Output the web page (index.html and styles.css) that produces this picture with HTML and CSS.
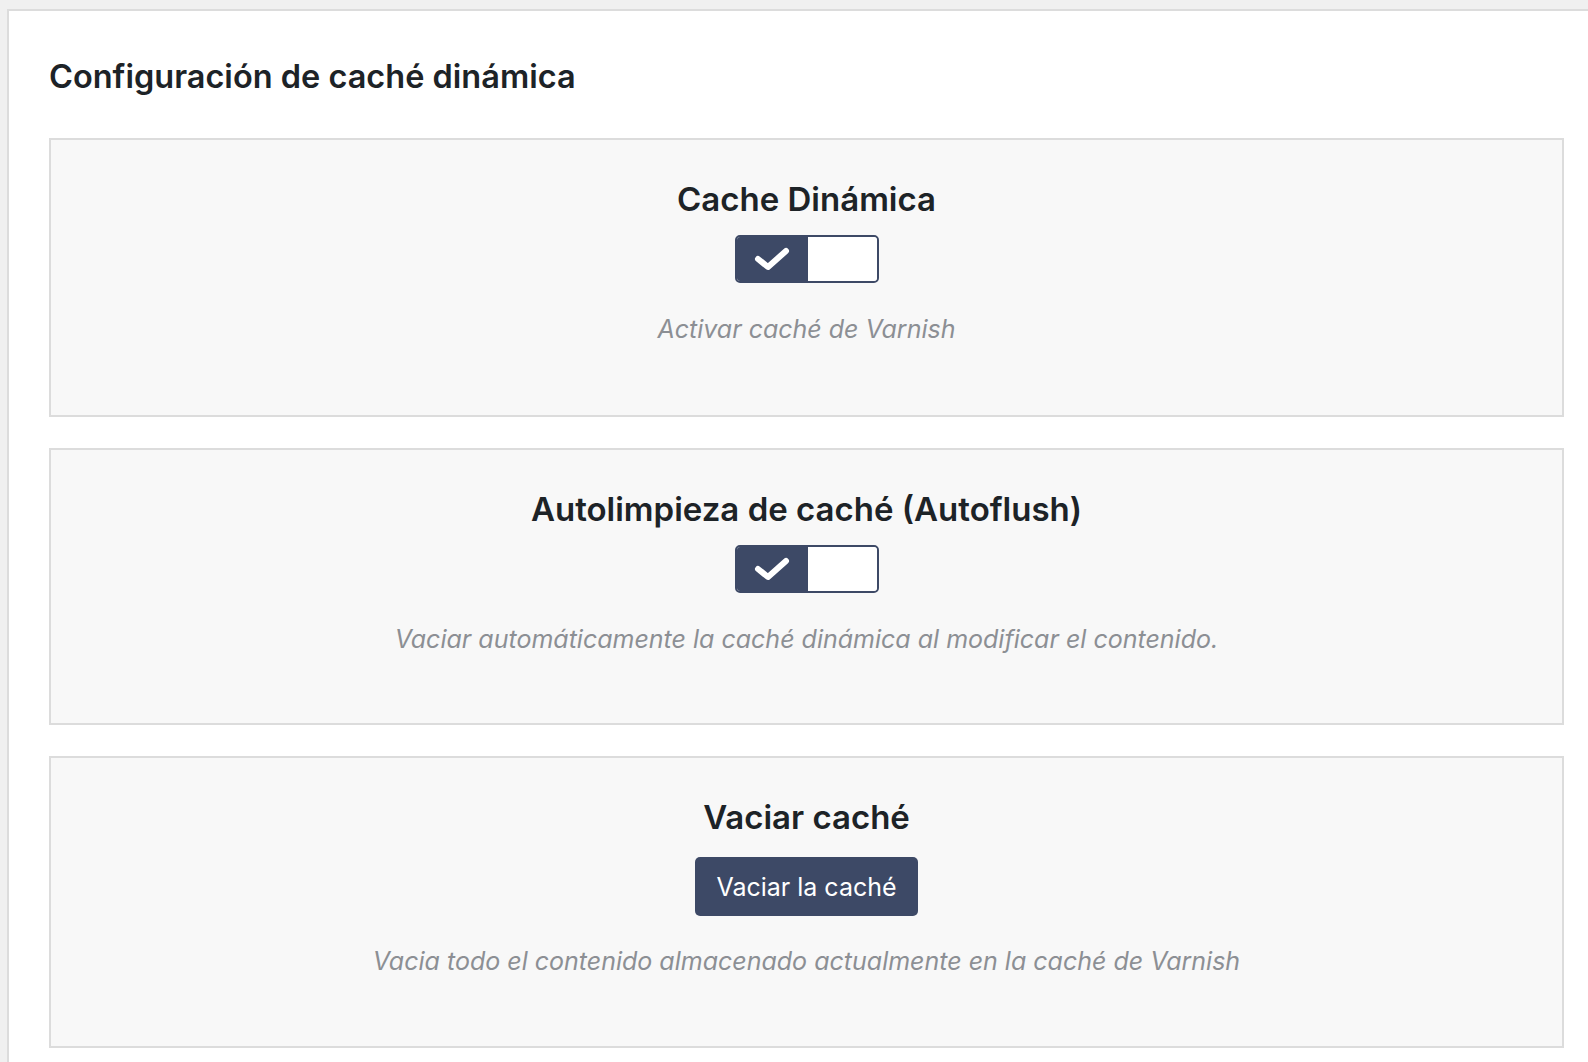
FILE: index.html
```html
<!DOCTYPE html>
<html lang="es">
<head>
<meta charset="utf-8">
<title>Configuración de caché dinámica</title>
<link rel="stylesheet" href="styles.css">
</head>
<body>
<div class="panel">
  <h1 class="title">Configuración de caché dinámica</h1>
  <div class="cards">
    <section class="card">
      <h2 class="card-title">Cache Dinámica</h2>
      <div class="toggle">
        <span class="toggle-on">
          <svg width="36" height="26" viewBox="0 0 36 26"><path d="M4 13 L14 21 L32 5" fill="none" stroke="#fff" stroke-width="6" stroke-linecap="round" stroke-linejoin="round"/></svg>
        </span>
        <span class="toggle-off"></span>
      </div>
      <p class="desc">Activar caché de Varnish</p>
    </section>
    <section class="card card-compact">
      <h2 class="card-title">Autolimpieza de caché (Autoflush)</h2>
      <div class="toggle">
        <span class="toggle-on">
          <svg width="36" height="26" viewBox="0 0 36 26"><path d="M4 13 L14 21 L32 5" fill="none" stroke="#fff" stroke-width="6" stroke-linecap="round" stroke-linejoin="round"/></svg>
        </span>
        <span class="toggle-off"></span>
      </div>
      <p class="desc">Vaciar automáticamente la caché dinámica al modificar el contenido.</p>
    </section>
    <section class="card card-action">
      <h2 class="card-title">Vaciar caché</h2>
      <button class="btn" type="button">Vaciar la caché</button>
      <p class="desc desc-after-btn">Vacia todo el contenido almacenado actualmente en la caché de Varnish</p>
    </section>
  </div>
</div>
</body>
</html>
```

FILE: styles.css
```css
html, body {
  margin: 0;
  padding: 0;
}
body {
  background: #f0f0f0;
  font-family: Inter, Roboto, "Liberation Sans", Arial, sans-serif;
  color: #1d2327;
  height: 1062px;
  overflow: hidden;
}
.panel {
  margin: 9px 0 0 7px;
  border-top: 2px solid #dcdcdc;
  border-left: 2px solid #dcdcdc;
  background: #fff;
  padding: 46px 24px 40px 40px;
  min-height: 1100px;
}
.title {
  margin: 0;
  font-size: 32.5px;
  line-height: 40px;
  font-weight: 600;
  color: #1d2327;
}
.cards {
  margin-top: 41px;
  display: flex;
  flex-direction: column;
  gap: 31px;
}
.card {
  background: #f8f8f8;
  border: 2px solid #dcdcdc;
  display: flex;
  flex-direction: column;
  align-items: center;
  padding: 39px 20px 70px;
}
.card-compact {
  padding-bottom: 68px;
}
.card-action {
  padding-bottom: 69px;
}
.card-title {
  margin: 0;
  font-size: 33px;
  line-height: 40px;
  font-weight: 600;
  color: #1d2327;
}
.toggle {
  margin-top: 16px;
  width: 144px;
  height: 48px;
  display: flex;
  border-radius: 5px;
  overflow: hidden;
  box-sizing: border-box;
  border: 2px solid #3d4966;
}
.toggle-on {
  width: 71px;
  background: #3d4966;
  display: flex;
  align-items: center;
  justify-content: center;
}
.toggle-off {
  flex: 1;
  background: #fff;
  border-radius: 0 3px 3px 0;
}
.desc {
  margin: 30px 0 0;
  font-size: 25px;
  line-height: 32px;
  font-style: italic;
  color: #8c8f94;
}
.desc-after-btn {
  margin-top: 29px;
}
.btn {
  margin-top: 20px;
  background: #3d4966;
  color: #fff;
  border: none;
  border-radius: 5px;
  height: 59px;
  padding: 0 21px;
  font-family: Inter, Roboto, "Liberation Sans", Arial, sans-serif;
  font-size: 25px;
  font-weight: 400;
  cursor: pointer;
}
```
